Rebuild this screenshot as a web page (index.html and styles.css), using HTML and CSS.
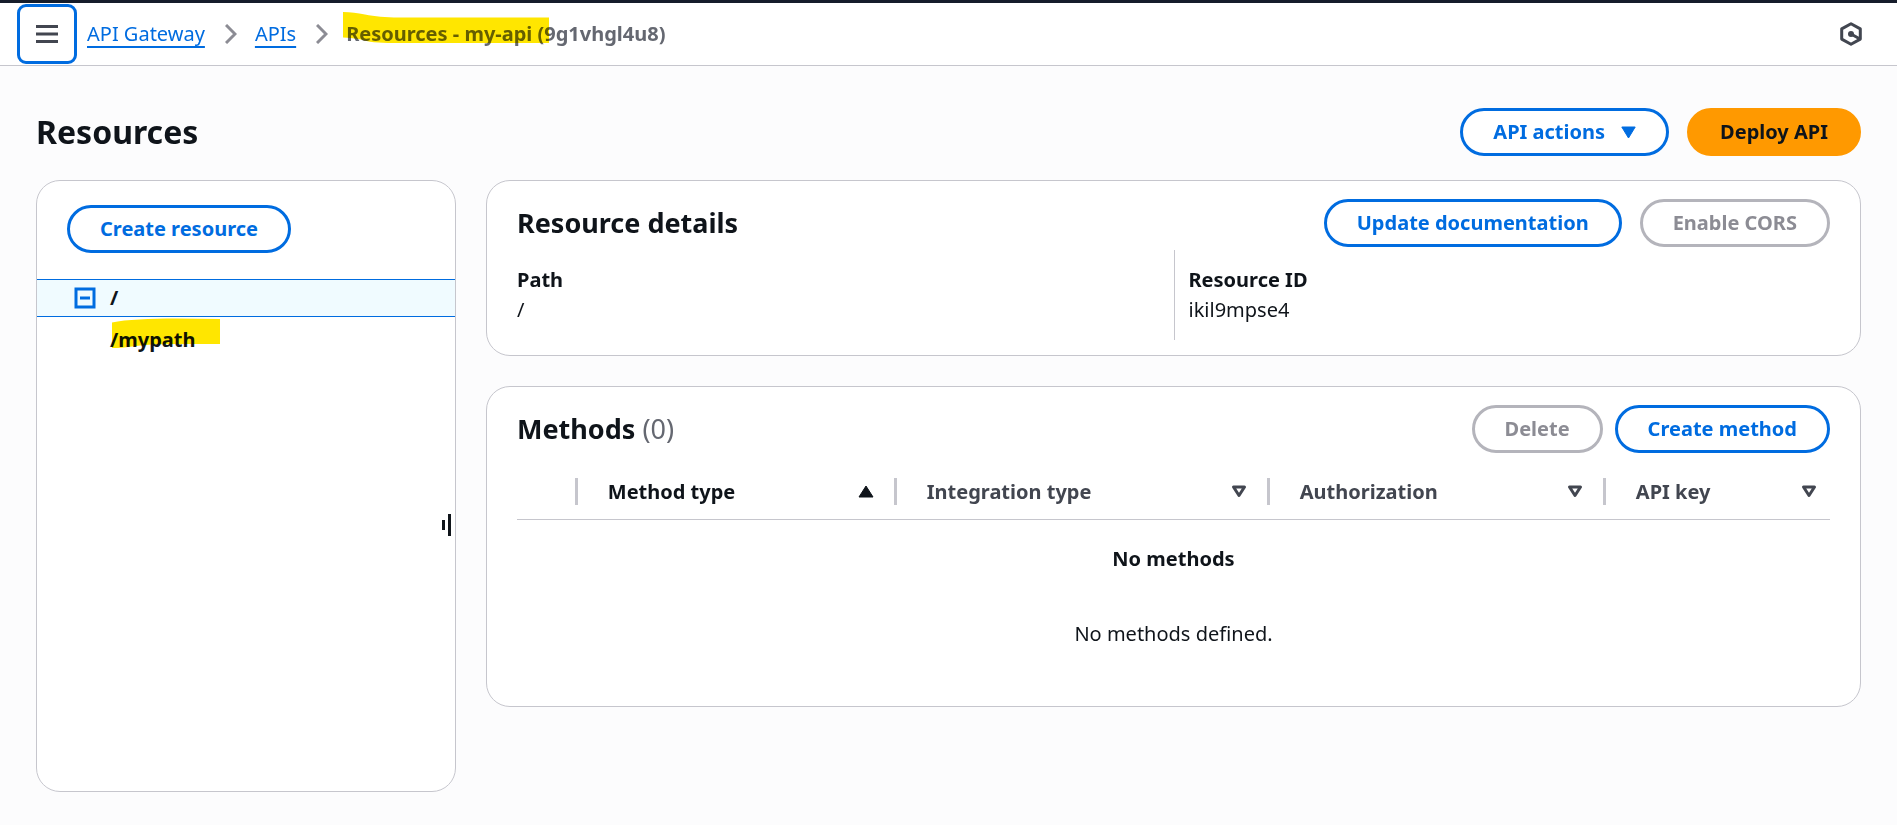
FILE: index.html
```html
<!DOCTYPE html>
<html lang="en">
<head>
<meta charset="utf-8">
<title>API Gateway - Resources</title>
<link rel="stylesheet" href="styles.css">
</head>
<body>
<header class="topbar">
  <button class="menu-button" type="button" aria-label="Open navigation">
    <svg width="22" height="20" viewBox="0 0 22 20" fill="none" stroke="currentColor" stroke-width="3"><path d="M0 2.500H22M0 10H22M0 17.500H22"/></svg>
  </button>
  <nav aria-label="Breadcrumbs">
    <ol class="crumbs">
      <li><a href="#">API Gateway</a></li>
      <li class="chevron" aria-hidden="true"><svg width="12" height="20" viewBox="0 0 12 20" fill="none" stroke="currentColor" stroke-width="3"><path d="M1 1L10 10L1 19"/></svg></li>
      <li><a href="#">APIs</a></li>
      <li class="chevron" aria-hidden="true"><svg width="12" height="20" viewBox="0 0 12 20" fill="none" stroke="currentColor" stroke-width="3"><path d="M1 1L10 10L1 19"/></svg></li>
      <li class="current" aria-current="page">Resources - my-api (9g1vhgl4u8)
        <svg class="marker marker-crumb" width="206" height="32" viewBox="0 0 206 32"><path d="M0 0C8 0 14 1 22 2.500C32 4.500 42 5.500 56 5.500H206V31H50C36 31 24 30 18 27.500C12 26 6 26 0 25.500Z"/></svg>
      </li>
    </ol>
  </nav>
  <button class="assist-button" type="button" aria-label="Amazon Q">
    <svg width="22" height="24" viewBox="0 0 22 24" fill="none" stroke="currentColor" stroke-width="3" stroke-linejoin="round"><path d="M11 1.700L20.300 6.900V17.100L11 22.300L1.700 17.100V6.900Z"/><path d="M11 12L20 17"/><circle cx="11" cy="12" r="3" fill="currentColor" stroke="none"/></svg>
  </button>
</header>

<main class="page">
  <div class="title-row">
    <h1>Resources</h1>
    <div class="actions">
      <button class="btn" type="button">API actions
        <svg width="15" height="13" viewBox="0 0 15 13" fill="currentColor" stroke="currentColor" stroke-width="1" stroke-linejoin="round"><path d="M.8 1H14.200L7.500 12Z"/></svg>
      </button>
      <button class="btn primary" type="button">Deploy API</button>
    </div>
  </div>

  <div class="columns">
    <aside class="card side">
      <div class="side-head"><button class="btn" type="button">Create resource</button></div>
      <ul class="tree">
        <li class="node selected">
          <button class="toggle" type="button" aria-label="Collapse">
            <svg width="22" height="22" viewBox="0 0 22 22" fill="none" stroke="currentColor" stroke-width="3"><rect x="2" y="2" width="18" height="18"/><path d="M6 11H16"/></svg>
          </button>
          <span>/</span>
        </li>
        <li class="node child">
          <span class="marked">/mypath
            <svg class="marker marker-path" width="108" height="31" viewBox="0 0 108 31"><path d="M0 4.500C14 1.500 38 .5 64 .5L108 1V26H79C60 26 35 26 20 28.500C12 30 6 30 0 30Z"/></svg>
          </span>
        </li>
      </ul>
      <button class="resize" type="button" aria-label="Resize panel"><i></i><b></b></button>
    </aside>

    <div class="content">
      <section class="card panel">
        <div class="panel-head">
          <h2>Resource details</h2>
          <div class="actions">
            <button class="btn" type="button">Update documentation</button>
            <button class="btn" type="button" disabled>Enable CORS</button>
          </div>
        </div>
        <dl class="details">
          <div><dt>Path</dt><dd>/</dd></div>
          <div><dt>Resource ID</dt><dd>ikil9mpse4</dd></div>
        </dl>
      </section>

      <section class="card panel">
        <div class="panel-head">
          <h2>Methods <span class="count">(0)</span></h2>
          <div class="actions tight">
            <button class="btn" type="button" disabled>Delete</button>
            <button class="btn" type="button">Create method</button>
          </div>
        </div>
        <table class="methods">
          <colgroup><col class="c-select"><col class="c-method"><col class="c-integration"><col class="c-auth"><col class="c-key"></colgroup>
          <thead>
            <tr>
              <td></td>
              <th class="sorted" scope="col"><div>Method type <svg width="16" height="13" viewBox="0 0 16 13" fill="currentColor" stroke="currentColor" stroke-linejoin="round"><path d="M1 12H15L8 1Z"/></svg></div></th>
              <th scope="col"><div>Integration type <svg width="16" height="13" viewBox="0 0 16 13" fill="none" stroke="currentColor" stroke-width="3" stroke-linejoin="round"><path d="M2.500 2H13.500L8 10.500Z"/></svg></div></th>
              <th scope="col"><div>Authorization <svg width="16" height="13" viewBox="0 0 16 13" fill="none" stroke="currentColor" stroke-width="3" stroke-linejoin="round"><path d="M2.500 2H13.500L8 10.500Z"/></svg></div></th>
              <th scope="col"><div>API key <svg width="16" height="13" viewBox="0 0 16 13" fill="none" stroke="currentColor" stroke-width="3" stroke-linejoin="round"><path d="M2.500 2H13.500L8 10.500Z"/></svg></div></th>
            </tr>
          </thead>
          <tbody>
            <tr><td class="empty" colspan="5"><strong>No methods</strong><p>No methods defined.</p></td></tr>
          </tbody>
        </table>
      </section>
    </div>
  </div>
</main>
</body>
</html>
```
FILE: styles.css
```css
* { box-sizing: border-box; }

body {
  margin: 0;
  min-height: 100vh;
  display: flex;
  flex-direction: column;
  background: #fcfcfd;
  color: #0f141a;
  font: 20px/30px "Noto Sans", "Open Sans", sans-serif;
}

h1, h2, dl, dd, ul, ol, p { margin: 0; padding: 0; }
ul, ol { list-style: none; }
button { font: inherit; color: inherit; cursor: pointer; }
svg { display: block; flex: none; }

.topbar {
  display: flex;
  align-items: center;
  height: 66px;
  padding: 0 35px 0 17px;
  background: #fff;
  border-top: 3px solid #161d2b;
  border-bottom: 1px solid #c6c6cd;
}
.menu-button {
  display: grid;
  place-items: center;
  width: 60px;
  height: 60px;
  margin-right: 10px;
  padding: 0;
  color: #424650;
  background: #fff;
  border: 3px solid #006ce0;
  border-radius: 9px;
}
.crumbs { display: flex; align-items: center; }
.crumbs a {
  color: #006ce0;
  text-decoration: underline;
  text-decoration-thickness: 2px;
  text-underline-offset: 5px;
}
.chevron { padding: 0 18px 0 20px; color: #8c8c94; }
.current { position: relative; color: #656871; font-weight: 700; }
.assist-button {
  margin-left: auto;
  padding: 0;
  border: 0;
  background: none;
  color: #424650;
}

.marker { position: absolute; fill: #ffe600; mix-blend-mode: multiply; pointer-events: none; }
.marker-crumb { left: -3px; top: -7px; }
.marker-path { left: 2px; top: -7px; }

.page { flex: 1; display: flex; flex-direction: column; padding: 42px 36px 33px; }
.title-row {
  display: flex;
  align-items: center;
  justify-content: space-between;
  margin-bottom: 24px;
}
h1 { font-size: 32px; line-height: 48px; font-weight: 700; }
h2 { font-size: 27px; line-height: 36px; font-weight: 700; }
.count { color: #656871; font-weight: 400; }

.actions { display: flex; gap: 18px; }
.actions.tight { gap: 12px; }
.btn {
  display: flex;
  align-items: center;
  gap: 16px;
  height: 48px;
  padding: 0 30px;
  color: #006ce0;
  background: #fff;
  border: 3px solid #006ce0;
  border-radius: 24px;
  font-weight: 700;
  white-space: nowrap;
}
.btn.primary { color: #0f141a; background: #f90; border-color: #f90; }
.btn:disabled { color: #8c8c94; border-color: #b4b4bb; cursor: default; }

.columns { flex: 1; display: flex; gap: 30px; }
.card { background: #fff; border: 1px solid #c6c6cd; border-radius: 24px; }

.side { position: relative; flex: none; width: 420px; }
.side-head { display: flex; padding: 24px 30px 26px; }
.node { display: flex; align-items: center; font-weight: 700; }
.node.selected {
  gap: 14px;
  height: 38px;
  padding-left: 37px;
  background: #f0fbff;
  border: solid #006ce0;
  border-width: 1px 0;
}
.node.child { height: 46px; padding-left: 73px; }
.toggle { padding: 0; border: 0; background: none; color: #006ce0; }
.marked { position: relative; }
.resize {
  position: absolute;
  right: 4px;
  top: 333px;
  display: flex;
  align-items: center;
  gap: 3px;
  height: 22px;
  padding: 0;
  border: 0;
  background: none;
}
.resize i, .resize b { width: 3px; background: #0f141a; }
.resize i { height: 10px; }
.resize b { height: 22px; }

.content { flex: 1; min-width: 0; display: flex; flex-direction: column; gap: 30px; }
.panel { padding: 18px 30px 15px; }
.panel-head { display: flex; align-items: center; justify-content: space-between; }

.details { display: grid; grid-template-columns: 1fr 1fr; margin-top: 3px; }
.details > div { height: 90px; padding-top: 15px; }
.details > div + div { padding-left: 14px; border-left: 1px solid #c6c6cd; }
dt { font-weight: 700; }

.methods { width: 100%; margin-top: 12px; border-collapse: collapse; table-layout: fixed; }
.c-select { width: 4.4%; }
.c-method { width: 24.3%; }
.c-integration { width: 28.4%; }
.c-auth { width: 25.6%; }
.c-key { width: 17.3%; }
.methods thead td, .methods th {
  height: 54px;
  padding: 0;
  border-bottom: 1px solid #c6c6cd;
  text-align: left;
}
.methods th { color: #424650; font-weight: 700; }
.methods th.sorted { color: #0f141a; }
.methods th div {
  display: flex;
  align-items: center;
  justify-content: space-between;
  height: 27px;
  padding: 0 20px 0 30px;
  border-left: 3px solid #c6c6cd;
}
.methods th:last-child div { padding-right: 13px; }
.empty { height: 172px; padding: 24px 0 0; text-align: center; vertical-align: top; }
.empty strong { font-weight: 700; }
.empty p { margin-top: 45px; }
```
